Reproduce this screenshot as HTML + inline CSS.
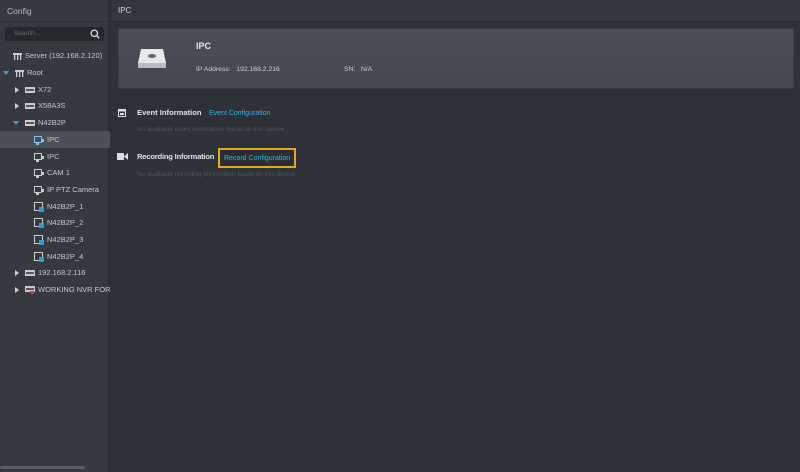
<!DOCTYPE html>
<html><head><style>
*{margin:0;padding:0;box-sizing:border-box}
body{width:800px;height:472px;overflow:hidden;background:#2e3137;font-family:"Liberation Sans",sans-serif;color:#d0d3d8;font-size:8px;position:relative}
.side{position:absolute;left:0;top:0;width:110px;height:472px;background:#363940;border-right:2px solid #2a2c31}
.sh{height:22px;line-height:22px;padding-left:7px;color:#b8bcc2;font-size:8.5px;border-bottom:1px solid #2c2e33}
.search{position:absolute;left:5px;top:27px;width:99px;height:14px;background:#26282c;border-radius:2px;color:#6a6e75;font-size:6.5px;line-height:14px;padding-left:9px}
.row{position:absolute;left:0;width:110px;height:16px;line-height:16px;font-size:7.5px;color:#c6c9ce;white-space:nowrap;overflow:hidden}
.sel{background:#4b5058}
.ic{display:inline-block;vertical-align:middle;margin-right:3px}
.tri{display:inline-block;width:0;height:0;vertical-align:middle;margin-right:6px}
.tr{border-left:4px solid #cfd2d6;border-top:3px solid transparent;border-bottom:3px solid transparent}
.td{border-top:4px solid #2fa3d6;border-left:3px solid transparent;border-right:3px solid transparent}
.top{position:absolute;left:112px;top:0;right:0;height:22px;background:#33363c;border-bottom:1px solid #2a2c31;line-height:22px;padding-left:6px;font-size:8px;color:#d5d8dc}
.card{position:absolute;left:118px;top:28px;width:676px;height:61px;background:linear-gradient(#4a4e56,#44474f);border:1px solid #3a3d44}
.dim{color:#4f535b;font-size:6.5px;position:absolute}
.lnk{color:#3fb0e0;font-size:7px}
</style></head><body>
<div class="side">
<div class="sh">Config</div>
<div class="search">Search...<svg style="position:absolute;right:4px;top:2px" width="10" height="10" viewBox="0 0 10 10"><circle cx="4.3" cy="4.3" r="3.2" fill="none" stroke="#ddd" stroke-width="1.3"/><line x1="6.6" y1="6.6" x2="9.2" y2="9.2" stroke="#ddd" stroke-width="1.4"/></svg></div>
<div class="row" style="top:48px;padding-left:13px"><svg class="ic" width="9" height="8"><rect x="0" y="1" width="9" height="2" fill="#ccc"/><rect x="1" y="3" width="1.3" height="5" fill="#ccc"/><rect x="4" y="3" width="1.3" height="5" fill="#ccc"/><rect x="7" y="3" width="1.3" height="5" fill="#ccc"/></svg>Server (192.168.2.120)</div>
<div class="row" style="top:65px;padding-left:3px"><span class="tri td"></span><svg class="ic" width="9" height="8"><rect x="0" y="1" width="9" height="2" fill="#ccc"/><rect x="1" y="3" width="1.3" height="5" fill="#ccc"/><rect x="4" y="3" width="1.3" height="5" fill="#ccc"/><rect x="7" y="3" width="1.3" height="5" fill="#ccc"/></svg>Root</div>
<div class="row" style="top:82px;padding-left:15px"><span class="tri tr"></span><svg class="ic" width="10" height="6"><rect width="10" height="6" fill="#ccc"/><rect x="1" y="2" width="8" height="2" fill="#555"/></svg>X72</div>
<div class="row" style="top:98px;padding-left:15px"><span class="tri tr"></span><svg class="ic" width="10" height="6"><rect width="10" height="6" fill="#ccc"/><rect x="1" y="2" width="8" height="2" fill="#555"/></svg>X58A3S</div>
<div class="row" style="top:115px;padding-left:13px"><span class="tri td"></span><svg class="ic" width="10" height="6"><rect width="10" height="6" fill="#ccc"/><rect x="1" y="2" width="8" height="2" fill="#555"/></svg>N42B2P</div>
<div class="row sel" style="top:131px;height:17px;line-height:17px;padding-left:34px"><svg class="ic" width="10" height="9"><rect x="0.5" y="0.5" width="7" height="6" fill="none" stroke="#7cc4ea"/><rect x="7" y="3" width="3" height="3" fill="#7cc4ea"/><rect x="2" y="7" width="3" height="2" fill="#7cc4ea"/></svg>IPC</div>
<div class="row" style="top:149px;padding-left:34px"><svg class="ic" width="10" height="9"><rect x="0.5" y="0.5" width="7" height="6" fill="none" stroke="#ccc"/><rect x="7" y="3" width="3" height="3" fill="#ccc"/><rect x="2" y="7" width="3" height="2" fill="#ccc"/></svg>IPC</div>
<div class="row" style="top:165px;padding-left:34px"><svg class="ic" width="10" height="9"><rect x="0.5" y="0.5" width="7" height="6" fill="none" stroke="#ccc"/><rect x="7" y="3" width="3" height="3" fill="#ccc"/><rect x="2" y="7" width="3" height="2" fill="#ccc"/></svg>CAM 1</div>
<div class="row" style="top:182px;padding-left:34px"><svg class="ic" width="10" height="9"><rect x="0.5" y="0.5" width="7" height="6" fill="none" stroke="#ccc"/><rect x="7" y="3" width="3" height="3" fill="#ccc"/><rect x="2" y="7" width="3" height="2" fill="#ccc"/></svg>IP PTZ Camera</div>
<div class="row" style="top:199px;padding-left:34px"><svg class="ic" width="10" height="10"><rect x="0.5" y="0.5" width="8" height="8" fill="none" stroke="#ccc"/><rect x="5" y="5" width="5" height="5" fill="#2a9fd0"/></svg>N42B2P_1</div>
<div class="row" style="top:215px;padding-left:34px"><svg class="ic" width="10" height="10"><rect x="0.5" y="0.5" width="8" height="8" fill="none" stroke="#ccc"/><rect x="5" y="5" width="5" height="5" fill="#2a9fd0"/></svg>N42B2P_2</div>
<div class="row" style="top:232px;padding-left:34px"><svg class="ic" width="10" height="10"><rect x="0.5" y="0.5" width="8" height="8" fill="none" stroke="#ccc"/><rect x="5" y="5" width="5" height="5" fill="#2a9fd0"/></svg>N42B2P_3</div>
<div class="row" style="top:249px;padding-left:34px"><svg class="ic" width="10" height="10"><rect x="0.5" y="0.5" width="8" height="8" fill="none" stroke="#ccc"/><rect x="5" y="5" width="5" height="5" fill="#2a9fd0"/></svg>N42B2P_4</div>
<div class="row" style="top:265px;padding-left:15px"><span class="tri tr"></span><svg class="ic" width="10" height="6"><rect width="10" height="6" fill="#ccc"/><rect x="1" y="2" width="8" height="2" fill="#555"/></svg>192.168.2.116</div>
<div class="row" style="top:282px;padding-left:15px"><span class="tri tr"></span><svg class="ic" width="10" height="8"><rect width="10" height="6" fill="#ccc"/><rect x="1" y="2" width="8" height="2" fill="#555"/><rect x="5" y="5" width="4" height="3" fill="#d33"/></svg>WORKING NVR FOR TEST</div>
<div style="position:absolute;left:0;top:466px;width:85px;height:3px;background:#5a5e66;border-radius:2px"></div>
</div>
<div class="top">IPC</div>
<div class="card">
<svg style="position:absolute;left:18px;top:18px" width="30" height="22" viewBox="0 0 30 22"><path d="M4 2h22l3 14H1z" fill="#e6e8ea"/><rect x="1" y="16" width="28" height="5" fill="#b9bcc0"/><ellipse cx="15" cy="9" rx="4" ry="2" fill="#666"/></svg>
<div style="position:absolute;left:77px;top:12px;font-size:9px;font-weight:bold;color:#e8eaed">IPC</div>
<div style="position:absolute;left:77px;top:37px;font-size:6.8px;color:#d0d3d7">IP Address:&nbsp;&nbsp;&nbsp;192.168.2.216</div>
<div style="position:absolute;left:225px;top:37px;font-size:6.8px;color:#d0d3d7">SN:&nbsp;&nbsp;&nbsp;N/A</div>
</div>
<svg style="position:absolute;left:118px;top:109px" width="8" height="8"><rect x="0.5" y="0.5" width="7" height="7" fill="none" stroke="#ddd"/><rect x="0.5" y="0.5" width="7" height="2" fill="#ddd"/><rect x="2" y="4" width="4" height="2" fill="#ddd"/></svg>
<div style="position:absolute;left:137px;top:108px;font-size:7.6px;font-weight:bold;color:#dfe2e6">Event Information</div>
<div class="lnk" style="position:absolute;left:209px;top:110px">Event Configuration</div>
<div class="dim" style="left:137px;top:126px">No available event information found on this device</div>
<svg style="position:absolute;left:117px;top:153px" width="11" height="7"><rect x="0" y="0" width="7" height="7" fill="#ddd"/><path d="M7 3.5L11 0v7z" fill="#ddd"/></svg>
<div style="position:absolute;left:137px;top:152px;font-size:7.6px;font-weight:bold;color:#dfe2e6;letter-spacing:-0.2px">Recording Information</div>
<div style="position:absolute;left:218px;top:148px;width:78px;height:20px;border:2px solid #e0a92a;background:#2a2d32"></div>
<div class="lnk" style="position:absolute;left:224px;top:155px">Record Configuration</div>
<div class="dim" style="left:137px;top:171px">No available recording information found on this device</div>
</body></html>
